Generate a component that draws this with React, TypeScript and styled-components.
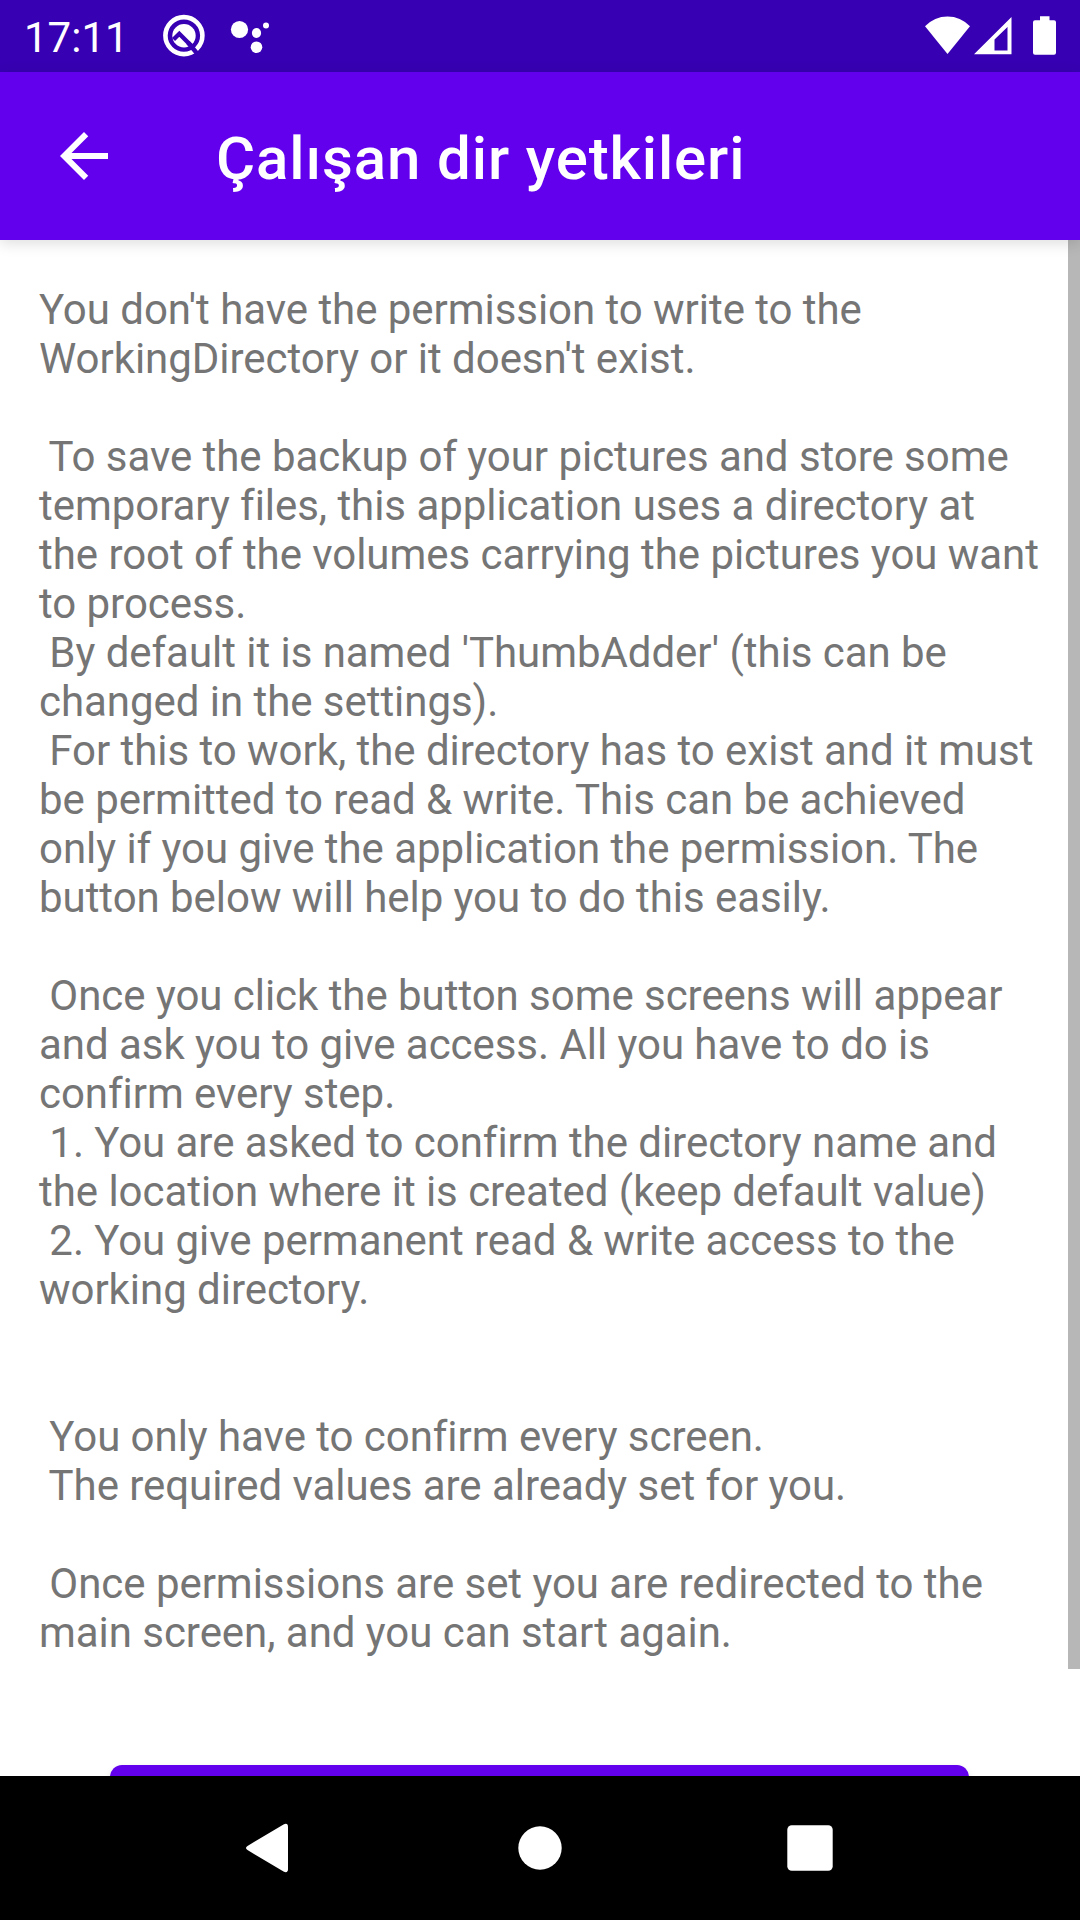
import React from 'react';
import styled, { createGlobalStyle } from 'styled-components';

const Global = createGlobalStyle`
  * { box-sizing: border-box; }
  body { margin: 0; background: #fff; font-family: Roboto, sans-serif; }
`;

const Screen = styled.div`
  width: 1080px;
  height: 1920px;
  display: flex;
  flex-direction: column;
  overflow: hidden;
  background: #fff;
`;

const StatusBar = styled.div`
  height: 72px;
  flex: none;
  display: flex;
  align-items: center;
  justify-content: space-between;
  padding: 0 24px;
  background: #3700b3;
  color: #fff;
`;

const StatusGroup = styled.div`
  display: flex;
  align-items: center;
`;

const Clock = styled.span`
  width: 136px;
  padding-top: 3px;
  font-size: 42px;
  line-height: 72px;
`;

const Icon = styled.svg`
  display: block;
  flex: none;
  fill: #fff;
`;

const AppBar = styled.header`
  height: 168px;
  flex: none;
  display: flex;
  align-items: center;
  gap: 96px;
  padding-left: 48px;
  background: #6200ee;
  box-shadow: 0 3px 14px rgba(0, 0, 0, 0.14);
  z-index: 1;
`;

const BackButton = styled.button`
  border: 0;
  padding: 0;
  background: none;
`;

const Title = styled.h1`
  margin: 0;
  padding-top: 6px;
  font-size: 60px;
  font-weight: 500;
  letter-spacing: 0.88px;
  line-height: 70px;
  color: #fff;
`;

const Body = styled.main`
  flex: 1;
  min-height: 0;
  display: flex;
  justify-content: space-between;
  overflow: hidden;
`;

const Content = styled.div`
  width: 1068px;
  display: flex;
  flex-direction: column;
  padding: 45px 0 0 39px;
`;

const Copy = styled.div`
  flex: none;
  font-size: 42px;
  line-height: 49px;
  letter-spacing: -0.045px;
  font-variant-ligatures: none;
  color: #757575;
  white-space: pre;
`;

const ActionButton = styled.button`
  flex: none;
  width: 859px;
  height: 108px;
  margin: 108px 0 0 71px;
  border: 0;
  border-radius: 12px;
  background: #6200ee;
  box-shadow: 0 3px 6px rgba(0, 0, 0, 0.15);
`;

const ScrollThumb = styled.div`
  width: 12px;
  height: 1429px;
  background: #b7b7b7;
`;

const Nav = styled.nav`
  height: 144px;
  flex: none;
  display: flex;
  align-items: center;
  justify-content: center;
  gap: 210px;
  background: #000;
`;

const message = `You don't have the permission to write to the
WorkingDirectory or it doesn't exist.

 To save the backup of your pictures and store some
temporary files, this application uses a directory at
the root of the volumes carrying the pictures you want
to process.
 By default it is named 'ThumbAdder' (this can be
changed in the settings).
 For this to work, the directory has to exist and it must
be permitted to read & write. This can be achieved
only if you give the application the permission. The
button below will help you to do this easily.

 Once you click the button some screens will appear
and ask you to give access. All you have to do is
confirm every step.
 1. You are asked to confirm the directory name and
the location where it is created (keep default value)
 2. You give permanent read & write access to the
working directory.


 You only have to confirm every screen.
 The required values are already set for you.

 Once permissions are set you are redirected to the
main screen, and you can start again.`;

export default function App() {
  return (
    <Screen>
      <Global />
      <StatusBar>
        <StatusGroup>
          <Clock>17:11</Clock>
          <Icon width="48" height="72" viewBox="160 0 48 72">
            <circle cx="183.9" cy="35.6" r="18.5" fill="none" stroke="#fff" strokeWidth="4.6" />
            <circle cx="184" cy="35.8" r="11.7" />
            <path d="M173.5 39.500L179.300 33.800L192 46.500" fill="none" stroke="#3700b3" strokeWidth="4.4" />
            <path d="M188 42.500L200 57" fill="none" stroke="#3700b3" strokeWidth="4.4" />
          </Icon>
          <Icon width="72" height="72" viewBox="208 0 72 72">
            <circle cx="239.5" cy="29.5" r="8.6" />
            <ellipse cx="256.5" cy="33" rx="4.6" ry="5" />
            <circle cx="266" cy="25.5" r="3" />
            <circle cx="256.5" cy="47.2" r="5.8" />
          </Icon>
        </StatusGroup>
        <StatusGroup>
          <Icon width="49" height="72" viewBox="923 0 49 72">
            <path d="M947.5 54L925 26.2Q934.5 16.4 947.5 16.4T970 26.2Z" />
          </Icon>
          <Icon width="45" height="72" viewBox="972 0 45 72">
            <path fillRule="evenodd" d="M974 54.3L1011.5 17V54.3ZM994.5 50.5H1007.5V27L994.5 39.5Z" />
          </Icon>
          <Icon width="39" height="72" viewBox="1017 0 39 72">
            <path d="M1040 16.3h9.5v4h4.5a2 2 0 0 1 2 2v30.4a2 2 0 0 1-2 2h-19a2 2 0 0 1-2-2V22.3a2 2 0 0 1 2-2h5z" />
          </Icon>
        </StatusGroup>
      </StatusBar>
      <AppBar>
        <BackButton>
          <Icon width="72" height="72" viewBox="0 0 24 24">
            <path d="M20 11H7.83l5.59-5.59L12 4l-8 8 8 8 1.41-1.41L7.83 13H20z" />
          </Icon>
        </BackButton>
        <Title>Çalışan dir yetkileri</Title>
      </AppBar>
      <Body>
        <Content>
          <Copy>{message}</Copy>
          <ActionButton />
        </Content>
        <ScrollThumb />
      </Body>
      <Nav>
        <Icon width="60" height="60" viewBox="240 1818 60 60">
          <path d="M247.5 1845.9L283.5 1824.4Q288 1822.5 288 1827V1869Q288 1873.5 283.5 1871.6L247.5 1850.1Q244.5 1848 247.5 1845.9Z" />
        </Icon>
        <Icon width="60" height="60" viewBox="0 0 60 60">
          <circle cx="30" cy="30" r="21.7" />
        </Icon>
        <Icon width="60" height="60" viewBox="0 0 60 60">
          <rect x="7.3" y="7.3" width="45.4" height="45.4" rx="4.5" />
        </Icon>
      </Nav>
    </Screen>
  );
}
